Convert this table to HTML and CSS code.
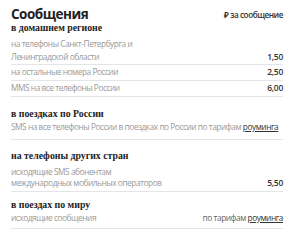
FILE: index.html
```html
<!DOCTYPE html>
<html lang="ru">
<head>
<meta charset="utf-8">
<link rel="stylesheet" href="styles.css">
</head>
<body>
<div class="page">
  <div class="top">
    <h1 class="title">Сообщения</h1>
    <span class="unit">₽ за сообщение</span>
  </div>

  <section class="sec sec-home">
    <h2 class="head">в домашнем регионе</h2>
    <div class="row row-first"><span class="label">на телефоны Санкт-Петербурга и<br>Ленинградской области</span><span class="val">1,50</span></div>
    <div class="row"><span class="label">на остальные номера России</span><span class="val">2,50</span></div>
    <div class="row"><span class="label">MMS на все телефоны России</span><span class="val">6,00</span></div>
  </section>

  <section class="sec sec-russia">
    <h2 class="head">в поездках по России</h2>
    <div class="row row-loose"><span class="label">SMS на все телефоны России в поездках по России по тарифам <a class="link" href="#">роуминга</a></span></div>
  </section>

  <section class="sec sec-intl">
    <h2 class="head">на телефоны других стран</h2>
    <div class="row row-two"><span class="label">исходящие SMS абонентам<br>международных мобильных операторов</span><span class="val">5,50</span></div>
  </section>

  <section class="sec sec-world">
    <h2 class="head">в поездах по миру</h2>
    <div class="row row-last"><span class="label">исходящие сообщения</span><span class="note">по тарифам <a class="link" href="#">роуминга</a></span></div>
  </section>
</div>
</body>
</html>
```
FILE: styles.css
```css
* { box-sizing: border-box; margin: 0; padding: 0; }
html, body { background: #fff; }
body { font-family: "Open Sans", "Liberation Sans", sans-serif; color: #333; }
.page { padding: 4px 17px 0 11px; }
.top { display: flex; justify-content: space-between; align-items: flex-end; height: 18px; }
.title { font-weight: 700; font-size: 13.5px; line-height: 16px; color: #222; letter-spacing: -0.5px; }
.unit { font-size: 8.2px; font-weight: 600; color: #333; line-height: 12px; letter-spacing: -0.45px; padding-bottom: 1px; }
.head { font-family: "Liberation Serif", "Times New Roman", serif; font-weight: 700; font-size: 9.8px; line-height: 12px; color: #222; }

.sec-home .head { margin-bottom: 3px; }
.sec-russia { margin-top: 11px; }
.sec-intl { margin-top: 10px; }
.sec-intl .head { margin-bottom: 3px; }
.sec-world { margin-top: 7px; }

.row { display: flex; justify-content: space-between; align-items: flex-end; padding: 1px 0 2px; border-bottom: 1px solid #e3e6e8; font-size: 8.3px; line-height: 12px; letter-spacing: -0.45px; }
.row-first { padding: 0 0 1px; line-height: 13px; }
.row-loose { padding: 1px 0 6px; }
.row-two { padding: 1px 0 3px; line-height: 11px; }
.row-last { padding: 1px 0 4px; }
.label { color: #9a9a9a; }
.val { color: #333; font-weight: 600; font-size: 8.5px; letter-spacing: -0.3px; }
.note { color: #666; }
.link { color: #333; text-decoration: underline; }
```
